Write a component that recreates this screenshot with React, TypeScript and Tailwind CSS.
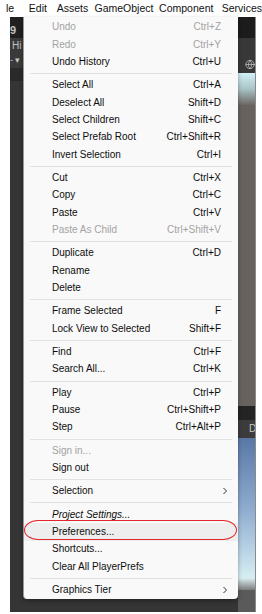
import { Globe } from "lucide-react";

type Item =
  | { sep: true }
  | { label: string; keys?: string; off?: boolean; sub?: boolean; italic?: boolean; hot?: boolean };

const items: Item[] = [
  { label: "Undo", keys: "Ctrl+Z", off: true },
  { label: "Redo", keys: "Ctrl+Y", off: true },
  { label: "Undo History", keys: "Ctrl+U" },
  { sep: true },
  { label: "Select All", keys: "Ctrl+A" },
  { label: "Deselect All", keys: "Shift+D" },
  { label: "Select Children", keys: "Shift+C" },
  { label: "Select Prefab Root", keys: "Ctrl+Shift+R" },
  { label: "Invert Selection", keys: "Ctrl+I" },
  { sep: true },
  { label: "Cut", keys: "Ctrl+X" },
  { label: "Copy", keys: "Ctrl+C" },
  { label: "Paste", keys: "Ctrl+V" },
  { label: "Paste As Child", keys: "Ctrl+Shift+V", off: true },
  { sep: true },
  { label: "Duplicate", keys: "Ctrl+D" },
  { label: "Rename" },
  { label: "Delete" },
  { sep: true },
  { label: "Frame Selected", keys: "F" },
  { label: "Lock View to Selected", keys: "Shift+F" },
  { sep: true },
  { label: "Find", keys: "Ctrl+F" },
  { label: "Search All...", keys: "Ctrl+K" },
  { sep: true },
  { label: "Play", keys: "Ctrl+P" },
  { label: "Pause", keys: "Ctrl+Shift+P" },
  { label: "Step", keys: "Ctrl+Alt+P" },
  { sep: true },
  { label: "Sign in...", off: true },
  { label: "Sign out" },
  { sep: true },
  { label: "Selection", sub: true },
  { sep: true },
  { label: "Project Settings...", italic: true },
  { label: "Preferences...", hot: true },
  { label: "Shortcuts..." },
  { label: "Clear All PlayerPrefs" },
  { sep: true },
  { label: "Graphics Tier", sub: true },
];

function Chevron() {
  return (
    <svg width="6" height="8" viewBox="0 0 6 8" className="mr-[-7px]">
      <polyline points="1.5,1 4.5,4 1.5,7" fill="none" stroke="#333" strokeWidth="1" />
    </svg>
  );
}

function MenuBar() {
  return (
    <div className="flex h-[17px] items-center bg-white pl-[6px] text-[10.5px] text-[#111]">
      <span className="w-[23px]">le</span>
      <span className="w-[28px]">Edit</span>
      <span className="w-[38px]">Assets</span>
      <span className="w-[65px]">GameObject</span>
      <span className="w-[63px]">Component</span>
      <span>Services</span>
    </div>
  );
}

function LeftStrip() {
  return (
    <div className="flex w-[13px] flex-col overflow-hidden text-[10px] text-[#c4c4c4]">
      <div className="flex h-[21px] items-end bg-[#202020] pb-[2px] font-bold text-[11px] leading-none">9</div>
      <div className="flex h-[30px] flex-col bg-[#3a3a3a] pt-[3px] leading-none">
        <span className="pl-[2px]">Hi</span>
        <span className="mt-[5px] whitespace-nowrap text-[9px]">- ▾</span>
      </div>
      <div className="h-[13px] bg-[#2a2a2a]" />
      <div className="flex-1 bg-[#353535]" />
    </div>
  );
}

function RightStrip() {
  return (
    <div className="flex w-[18px] flex-col overflow-hidden border-r border-[#8a8a8a] text-[10px] text-[#c8c8c8]">
      <div className="h-[21px] bg-[#1c1c1c]" />
      <div className="flex h-[35px] items-end bg-[#383838] pb-[3px] pl-[7px]">
        <Globe size={11} color="#d0d0d0" strokeWidth={1.6} />
      </div>
      <div className="h-[32px] bg-gradient-to-b from-[#d2f1f8] via-[#a9c3c6] to-[#6c6864]" />
      <div className="flex-1 bg-[#67625e]" />
      <div className="h-[14px] bg-[#242424]" />
      <div className="flex h-[18px] items-center bg-[#3c3c3c] pl-[11px] leading-none">D</div>
      <div className="h-[140px] bg-gradient-to-b from-[#5a78a6] via-[#8eabcf] to-[#d6eef2]" />
      <div className="h-[12px] bg-gradient-to-b from-[#dceff0] to-[#7c7c7c]" />
      <div className="h-[22px] bg-[#5a5a5a]" />
    </div>
  );
}

function EditMenu() {
  return (
    <div className="absolute left-[23px] top-[17px] w-[215px] rounded-b-[4px] border-l border-[#9a9a9a] bg-[#f9f9f9] pt-[1.5px] shadow-[0_2px_4px_rgba(0,0,0,0.35)]">
      {items.map((it, i) =>
        "sep" in it ? (
          <div key={i} className="flex h-[5.9px] items-center px-[6px]">
            <div className="h-px w-full bg-[#e2e2e2]" />
          </div>
        ) : (
          <div
            key={i}
            className={`flex h-[17.38px] items-center justify-between pl-[28px] pr-[17px] text-[10px] leading-none ${
              it.off ? "text-[#a3a3a3]" : "text-[#0d0d0d]"
            } ${it.italic ? "italic" : ""} ${it.hot ? "bg-[#eeeeee]" : ""}`}
          >
            <span>{it.label}</span>
            {it.keys && <span>{it.keys}</span>}
            {it.sub && <Chevron />}
          </div>
        )
      )}
    </div>
  );
}

export default function App() {
  return (
    <div className="relative h-[614px] w-[262px] overflow-hidden bg-white font-['Liberation_Sans',Arial,sans-serif]">
      <MenuBar />
      <div className="flex h-[595px] pl-[10px] pr-[6px]">
        <LeftStrip />
        <div className="flex-1 bg-[#353535]" />
        <RightStrip />
      </div>
      <EditMenu />
      <div className="pointer-events-none absolute left-[24px] top-[520px] h-[20px] w-[213px] rounded-[14px/10px] border-[1.5px] border-[#e3262b]" />
    </div>
  );
}
